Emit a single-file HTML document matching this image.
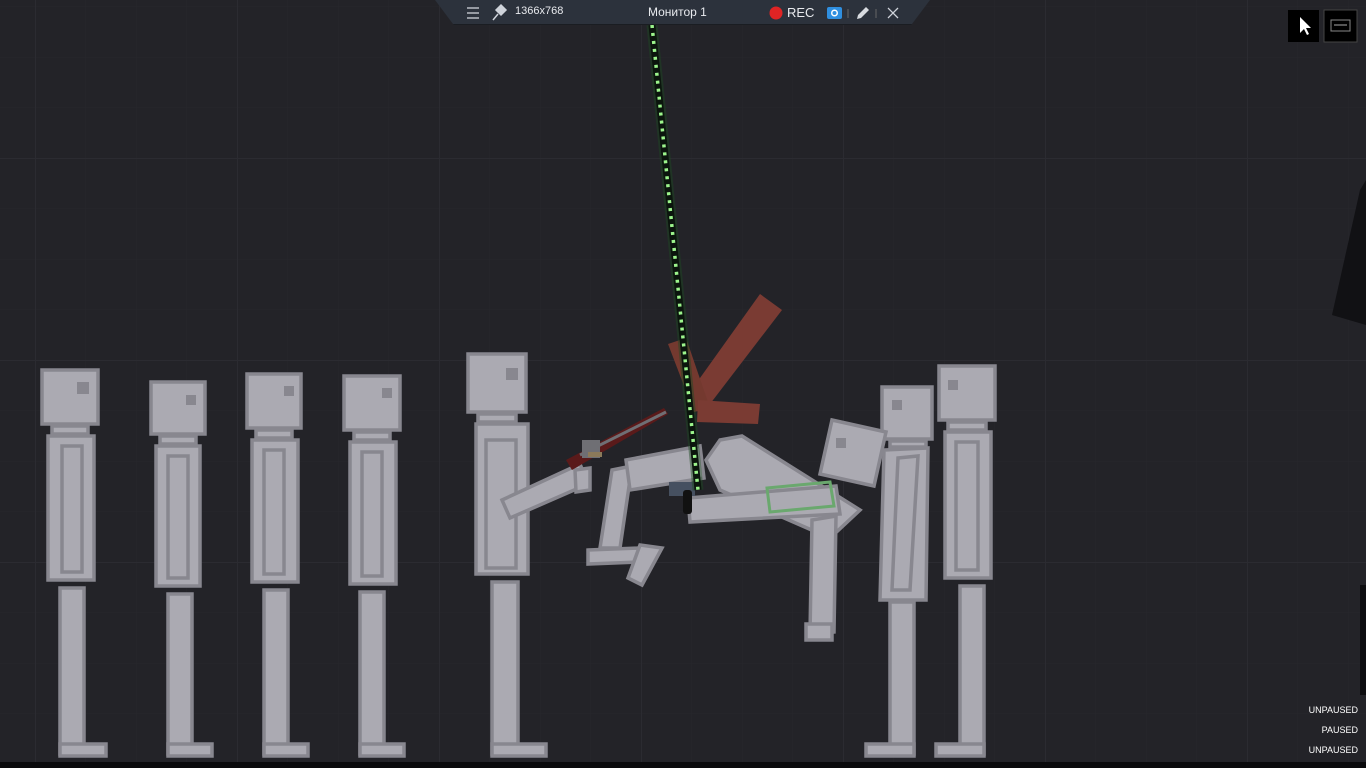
<!DOCTYPE html>
<html><head><meta charset="utf-8"><style>
html,body{margin:0;padding:0;width:1366px;height:768px;overflow:hidden;background:#232328;font-family:"Liberation Sans",sans-serif}
svg{position:absolute;left:0;top:0}
.t{position:absolute;color:#e8eaee;font-size:12px;top:5px}
.st{position:absolute;right:8px;color:#fff;font-size:9px}
</style></head><body>
<svg width="1366" height="768" viewBox="0 0 1366 768">
<defs>
<pattern id="g" width="50.5" height="50.5" patternUnits="userSpaceOnUse" x="35" y="-44"><path d="M0 0H50.5M0 0V50.5" stroke="#27272c" stroke-width="1" fill="none"/></pattern>
<pattern id="G" width="202" height="202" patternUnits="userSpaceOnUse" x="35" y="-44"><path d="M0 0H202M0 0V202" stroke="#2b2b31" stroke-width="2" fill="none"/></pattern>
</defs>
<rect width="1366" height="768" fill="#232328"/>
<rect width="1366" height="768" fill="url(#g)"/>
<rect width="1366" height="768" fill="url(#G)"/>
<g fill="#abaab2" stroke="#88878f" stroke-width="3.5">
<rect x="42" y="370" width="56" height="54"/><rect x="52" y="426" width="36" height="8"/>
<rect x="48" y="436" width="46" height="144"/><rect x="62" y="446" width="20" height="126"/>
<rect x="60" y="588" width="24" height="166"/><rect x="60" y="744" width="46" height="12"/>
<rect x="151" y="382" width="54" height="52"/><rect x="160" y="436" width="36" height="8"/>
<rect x="156" y="446" width="44" height="140"/><rect x="168" y="456" width="20" height="122"/>
<rect x="168" y="594" width="24" height="160"/><rect x="168" y="744" width="44" height="12"/>
<rect x="247" y="374" width="54" height="54"/><rect x="256" y="430" width="36" height="8"/>
<rect x="252" y="440" width="46" height="142"/><rect x="264" y="450" width="20" height="124"/>
<rect x="264" y="590" width="24" height="164"/><rect x="264" y="744" width="44" height="12"/>
<rect x="344" y="376" width="56" height="54"/><rect x="354" y="432" width="36" height="8"/>
<rect x="350" y="442" width="46" height="142"/><rect x="362" y="452" width="20" height="124"/>
<rect x="360" y="592" width="24" height="162"/><rect x="360" y="744" width="44" height="12"/>
<rect x="468" y="354" width="58" height="58"/><rect x="478" y="414" width="38" height="8"/>
<rect x="476" y="424" width="52" height="150"/><rect x="486" y="440" width="30" height="128"/>
<rect x="492" y="582" width="26" height="172"/><rect x="492" y="744" width="54" height="12"/>
<polygon points="502,500 580,464 588,484 510,518"/>
<rect x="882" y="387" width="50" height="52"/><rect x="890" y="441" width="36" height="6"/>
<polygon points="884,450 928,448 926,600 880,600"/><polygon points="898,458 918,456 910,590 892,590"/>
<rect x="890" y="602" width="24" height="152"/><rect x="866" y="744" width="48" height="12"/>
<rect x="939" y="366" width="56" height="54"/><rect x="948" y="422" width="38" height="8"/>
<rect x="945" y="432" width="46" height="146"/><rect x="956" y="442" width="22" height="128"/>
<rect x="960" y="586" width="24" height="168"/><rect x="936" y="744" width="48" height="12"/>
<polygon points="612,470 632,466 620,548 600,548"/>
<polygon points="588,550 640,548 640,562 588,564"/>
<polygon points="640,545 662,548 642,585 628,578"/>
<polygon points="626,460 700,446 704,478 630,490"/>
<polygon points="720,440 742,436 860,510 830,538 720,490 706,460"/>
<polygon points="812,520 836,516 834,632 810,634"/>
<rect x="806" y="624" width="26" height="16"/>
<polygon points="688,498 836,486 840,514 690,522"/>
<polygon points="832,420 886,432 874,486 820,474"/>
<polygon points="575,470 590,468 590,490 576,492"/>
</g>
<g fill="#88878f">
<rect x="77" y="382" width="12" height="12"/><rect x="186" y="395" width="10" height="10"/><rect x="284" y="386" width="10" height="10"/>
<rect x="382" y="388" width="10" height="10"/><rect x="506" y="368" width="12" height="12"/><rect x="892" y="400" width="10" height="10"/>
<rect x="948" y="380" width="10" height="10"/><rect x="836" y="438" width="10" height="10"/>
</g>
<polygon points="767,488 830,482 834,506 770,512" fill="none" stroke="#6aa86e" stroke-width="3"/>
<polygon points="760,294 782,310 710,404 690,392" fill="#7a3b33"/>
<polygon points="668,344 686,338 710,408 694,412" fill="#74392f"/>
<polygon points="698,400 760,404 758,424 697,422" fill="#7a3b33"/>
<polygon points="566,460 664,408 668,414 572,470" fill="#5a1a1a"/>
<line x1="580" y1="455" x2="666" y2="412" stroke="#6f6f74" stroke-width="3"/>
<rect x="582" y="440" width="18" height="18" fill="#6f6f74"/>
<rect x="588" y="452" width="14" height="5" fill="#8b7a5a"/>
<rect x="669" y="482" width="26" height="14" fill="#465060"/>
<rect x="683" y="490" width="9" height="24" rx="3" fill="#111"/>
<line x1="652" y1="25" x2="698" y2="490" stroke="#1d4a22" stroke-width="11" opacity=".45"/>
<line x1="652" y1="25" x2="698" y2="490" stroke="#0b150d" stroke-width="7"/>
<line x1="652" y1="25" x2="698" y2="490" stroke="#9cf58c" stroke-width="3.5" stroke-dasharray="3 5"/>
<polygon points="1366,180 1366,325 1332,315 1360,190" fill="#111114"/>
<rect x="1360" y="585" width="6" height="110" fill="#0d0d10"/>
<rect x="0" y="762" width="1366" height="6" fill="#0a0a0c"/>
<polygon points="435,0 930,0 912,24 453,24" fill="#2c323c"/>
<polygon points="453,24 912,24 911,25 454,25" fill="#1a1d22"/>
<g stroke="#cfd3da" stroke-width="1.3"><line x1="467" y1="8" x2="479" y2="8"/><line x1="467" y1="13" x2="479" y2="13"/><line x1="467" y1="18" x2="479" y2="18"/></g>
<path d="M493 20 L498 14 M496 10 L501 5 L506 10 L501 15 Z" stroke="#cfd3da" stroke-width="1.5" fill="#cfd3da"/>
<circle cx="776" cy="13" r="6.5" fill="#e02424"/>
<rect x="827" y="7" width="15" height="12" rx="2" fill="#2f8fe0"/><circle cx="834.5" cy="13" r="3.5" fill="#fff"/><circle cx="834.5" cy="13" r="2" fill="#2f8fe0"/>
<line x1="848" y1="9" x2="848" y2="18" stroke="#666"/><line x1="876" y1="9" x2="876" y2="18" stroke="#666"/>
<path d="M857 19 L858 15 L866 7 L869 10 L861 18 Z" fill="#d8dbe0"/>
<path d="M888 8 L898 18 M898 8 L888 18" stroke="#cfd3da" stroke-width="1.3"/>
<rect x="1288" y="10" width="31" height="32" fill="#000"/>
<path d="M1300 17 L1300 33 L1304 29 L1307 35 L1309 34 L1306 28 L1311 28 Z" fill="#fff"/>
<rect x="1324" y="10" width="33" height="32" fill="#000" stroke="#444" stroke-width="1"/>
<rect x="1331" y="20" width="19" height="11" fill="none" stroke="#888" stroke-width="1"/>
<line x1="1334" y1="25" x2="1347" y2="25" stroke="#aaa"/>
</svg>
<div class="t" style="left:515px;font-size:11px">1366x768</div>
<div class="t" style="left:648px">Монитор 1</div>
<div class="t" style="left:787px;font-size:13px;top:5px">REC</div>
<div class="st" style="top:705px">UNPAUSED</div>
<div class="st" style="top:725px">PAUSED</div>
<div class="st" style="top:745px">UNPAUSED</div>
</body></html>
